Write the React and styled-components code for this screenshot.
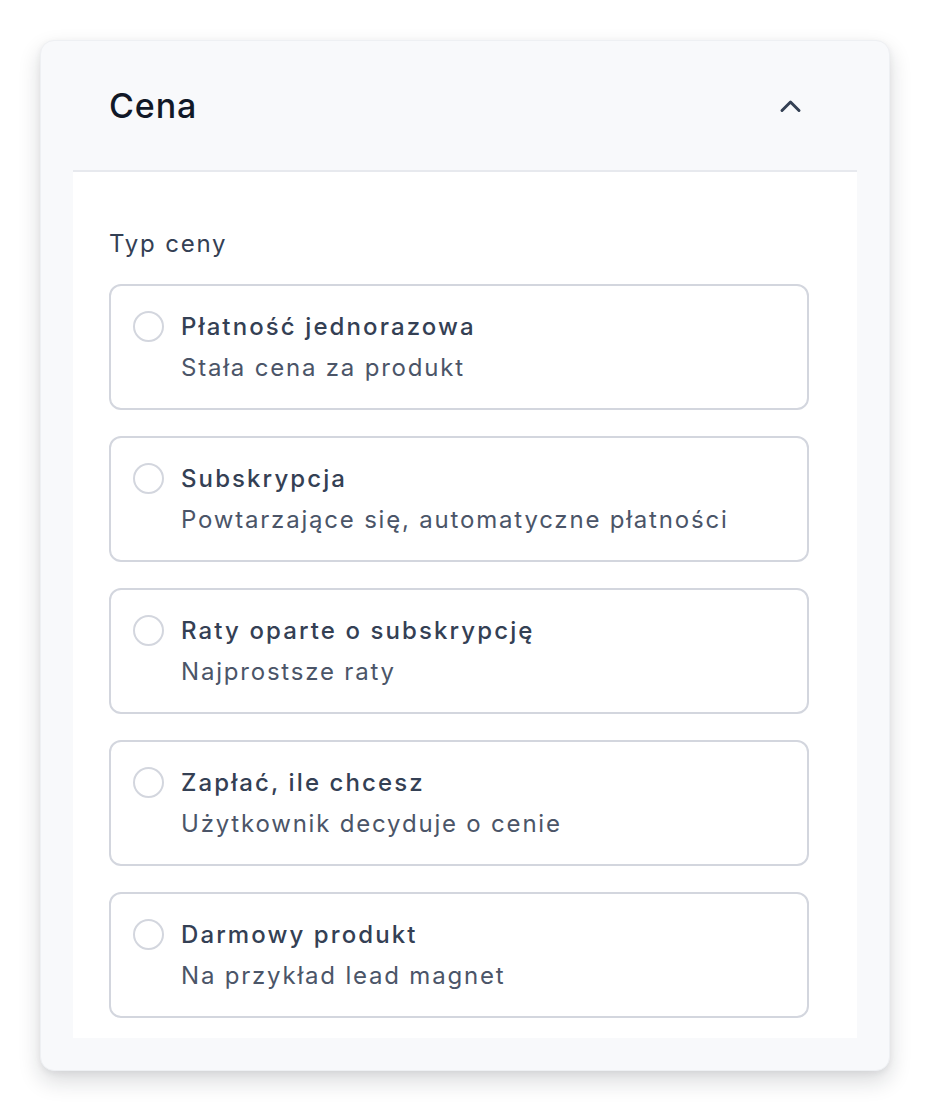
import React from "react";
import styled, { createGlobalStyle } from "styled-components";

const Global = createGlobalStyle`
  html, body { margin: 0; padding: 0; background: #ffffff; }
  body { font-family: Inter, "Noto Sans", sans-serif; -webkit-font-smoothing: antialiased; }
`;

const Page = styled.div`
  padding: 40px;
  width: 850px;
`;

const Card = styled.section`
  background: #f8f9fb;
  border-radius: 14px;
  border: 1px solid #eef0f3;
  box-shadow: 0 10px 22px rgba(17, 24, 39, 0.16), 0 2px 6px rgba(17, 24, 39, 0.06);
  padding: 0 32px 32px;
`;

const Header = styled.div`
  height: 129px;
  display: flex;
  align-items: center;
  justify-content: space-between;
  padding: 0 36px;
  border-bottom: 2px solid #e7e9ee;
`;

const Title = styled.h2`
  margin: 0;
  font-size: 34px;
  font-weight: 500;
  color: #111827;
  letter-spacing: 0.9px;
`;

const Toggle = styled.button`
  border: 0;
  background: transparent;
  padding: 0;
  margin-right: 19px;
  display: flex;
  color: #344054;
  cursor: pointer;
`;

const Body = styled.div`
  background: #ffffff;
  padding: 56px 48px 20px 36px;
`;

const Label = styled.div`
  font-size: 24px;
  line-height: 32px;
  color: #344054;
  font-weight: 400;
  letter-spacing: 1.8px;
  margin-bottom: 24px;
`;

const List = styled.div`
  display: flex;
  flex-direction: column;
  gap: 26px;
`;

const Option = styled.label`
  display: flex;
  align-items: flex-start;
  gap: 17px;
  height: 126px;
  box-sizing: border-box;
  border: 2px solid #d3d6de;
  border-radius: 12px;
  padding: 25px 22px;
  background: #fff;
  cursor: pointer;
`;

const Radio = styled.span`
  flex: none;
  width: 31px;
  height: 31px;
  box-sizing: border-box;
  border-radius: 50%;
  border: 2px solid #d3d6de;
  margin-top: 0;
`;

const Texts = styled.div`
  display: flex;
  flex-direction: column;
`;

const OptTitle = styled.span`
  font-size: 24px;
  line-height: 32px;
  font-weight: 500;
  letter-spacing: 2.1px;
  color: #344054;
`;

const OptDesc = styled.span`
  font-size: 24px;
  line-height: 34px;
  margin-top: 8px;
  font-weight: 400;
  letter-spacing: 1.8px;
  color: #4b5568;
`;

const options = [
  ["Płatność jednorazowa", "Stała cena za produkt"],
  ["Subskrypcja", "Powtarzające się, automatyczne płatności"],
  ["Raty oparte o subskrypcję", "Najprostsze raty"],
  ["Zapłać, ile chcesz", "Użytkownik decyduje o cenie"],
  ["Darmowy produkt", "Na przykład lead magnet"],
];

export default function App() {
  return (
    <>
      <Global />
      <Page>
        <Card>
          <Header>
            <Title>Cena</Title>
            <Toggle aria-label="Zwiń">
              <svg width="23" height="16" viewBox="0 0 23 16" fill="none">
                <path d="M3 12.5 L11.5 4 L20 12.5" stroke="currentColor" strokeWidth="3" strokeLinecap="round" strokeLinejoin="round" />
              </svg>
            </Toggle>
          </Header>
          <Body>
            <Label>Typ ceny</Label>
            <List>
              {options.map(([t, d]) => (
                <Option key={t}>
                  <Radio />
                  <Texts>
                    <OptTitle>{t}</OptTitle>
                    <OptDesc>{d}</OptDesc>
                  </Texts>
                </Option>
              ))}
            </List>
          </Body>
        </Card>
      </Page>
    </>
  );
}
